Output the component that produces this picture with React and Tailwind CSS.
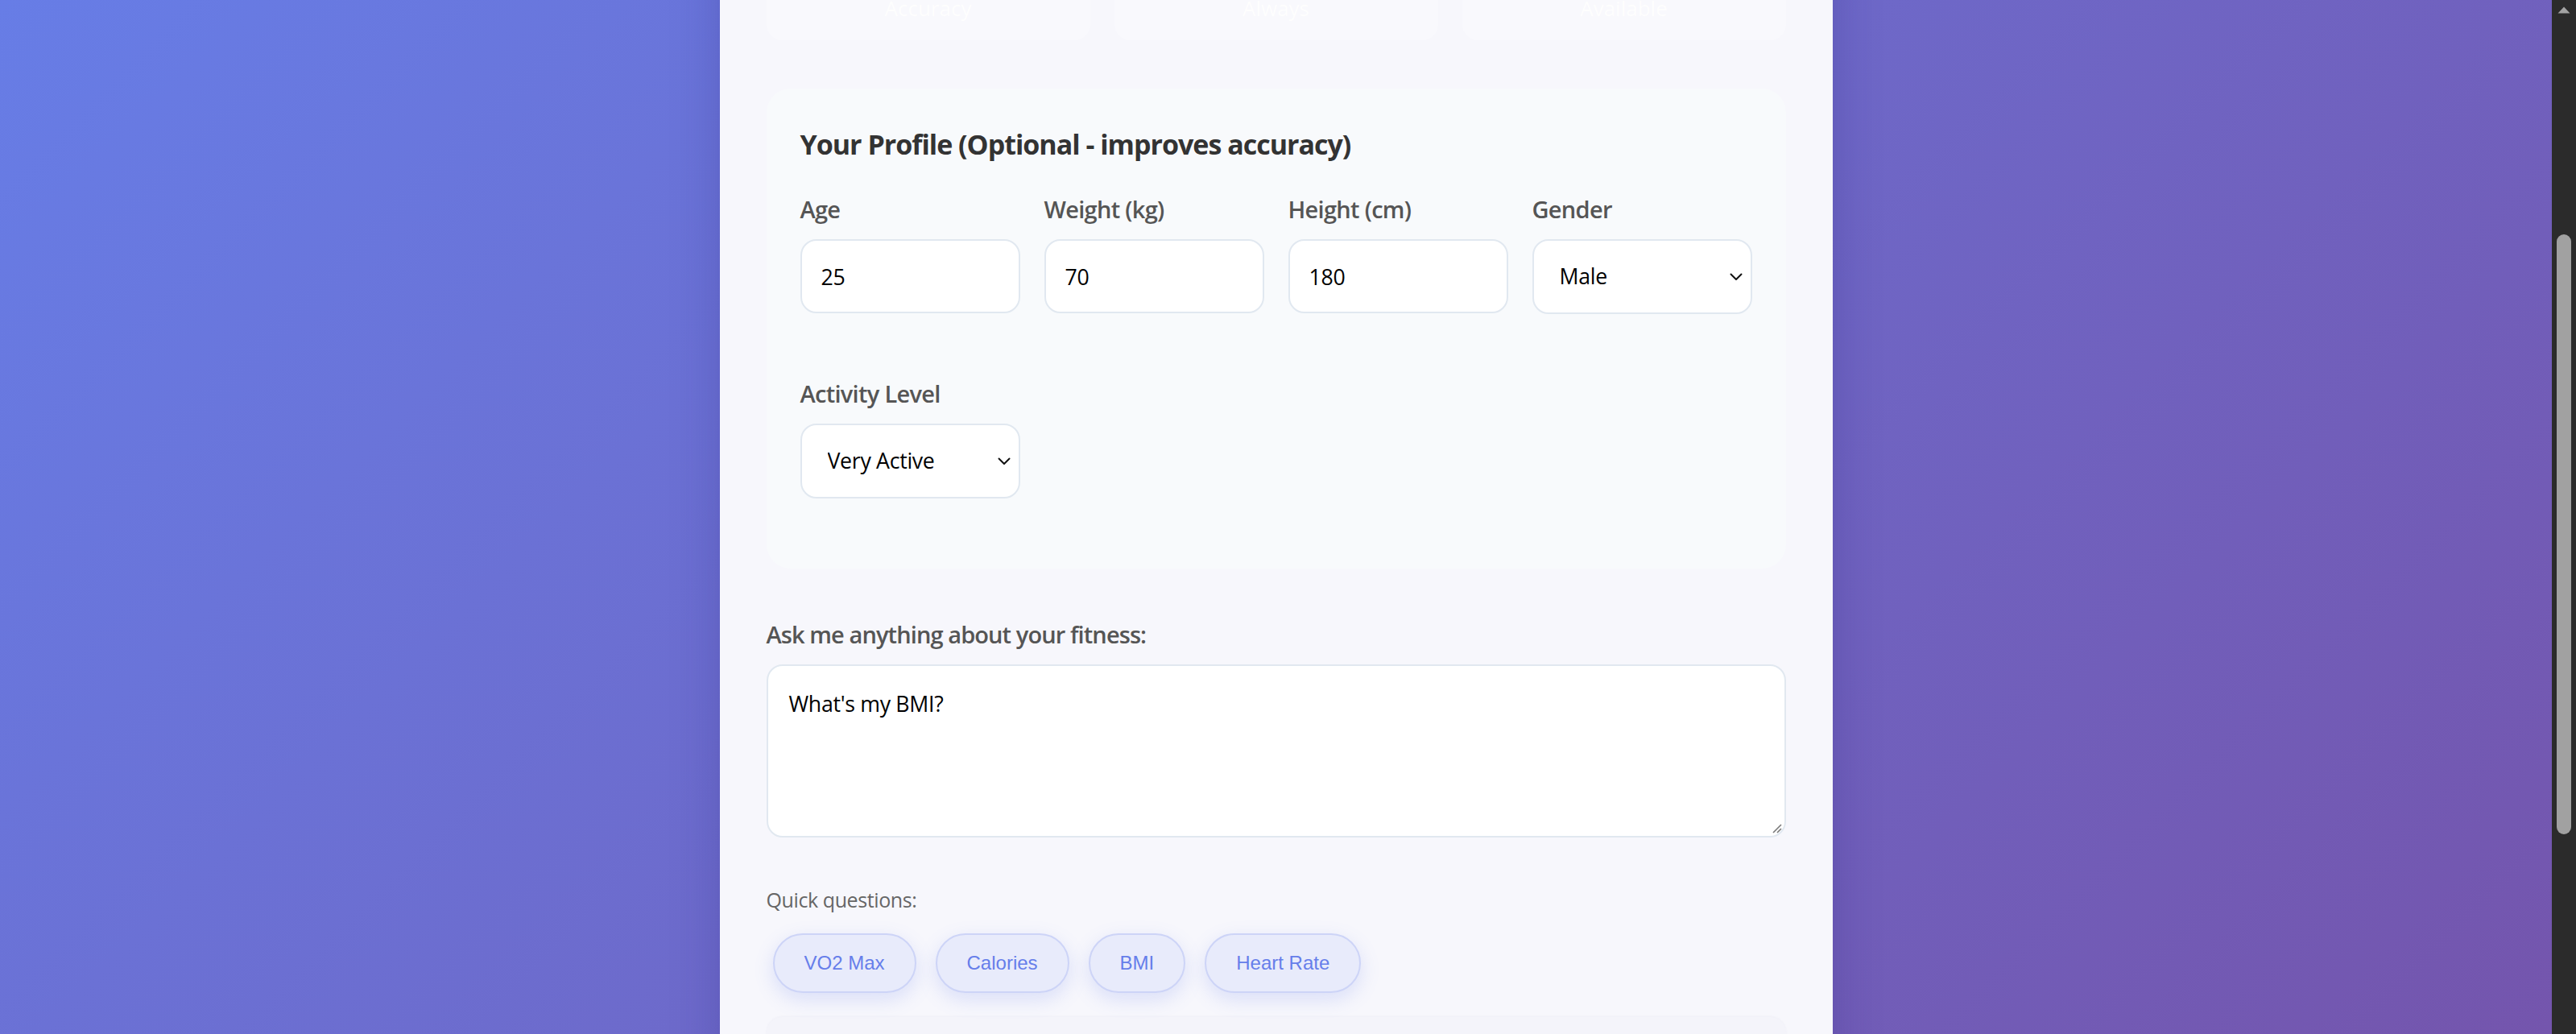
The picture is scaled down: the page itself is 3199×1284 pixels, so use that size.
import React from "react";

const stats = [
  { v: "95%", l: "Accuracy" },
  { v: "24/7", l: "Always" },
  { v: "Free", l: "Available" },
];

const quick = ["VO2 Max", "Calories", "BMI", "Heart Rate"];

function Chevron() {
  return (
    <svg
      className="pointer-events-none absolute right-[12px] top-1/2 -translate-y-1/2"
      width="16"
      height="10"
      viewBox="0 0 16 10"
      fill="none"
    >
      <path d="M1.5 1.5 L8 8 L14.5 1.5" stroke="#111" strokeWidth="2" strokeLinecap="round" strokeLinejoin="round" />
    </svg>
  );
}

function Field({ label, children }) {
  return (
    <div className="flex flex-col">
      <label className="mb-[18px] block text-[29px] font-semibold leading-[39px] tracking-[-0.7px] text-[#555]">
        {label}
      </label>
      {children}
    </div>
  );
}

const inputCls =
  "h-[92px] w-full rounded-[20px] border-2 border-[#e1e8f0] bg-white px-[24px] text-[26.7px] tracking-[-0.3px] text-black outline-none font-['Open_Sans',sans-serif]";

function TextInput({ value }) {
  return <input type="text" defaultValue={value} className={inputCls} />;
}

function Select({ value, options }) {
  return (
    <div className="relative">
      <select
        defaultValue={value}
        className="h-[93px] w-full appearance-none rounded-[20px] border-2 border-[#e1e8f0] bg-white pl-[32px] pr-[40px] text-[26.7px] tracking-[-0.3px] text-black outline-none font-['Open_Sans',sans-serif]"
      >
        {options.map((o) => (
          <option key={o}>{o}</option>
        ))}
      </select>
      <Chevron />
    </div>
  );
}

export default function App() {
  return (
    <div className="flex h-[1284px] w-full overflow-hidden font-['Open_Sans',sans-serif]">
      <main className="min-w-0 flex-1 overflow-hidden bg-[linear-gradient(135deg,#677de6_0%,#7455ad_100%)]">
        <div className="mx-auto -mt-[168px] w-[1382px] rounded-[40px] bg-[#f7f7fc] px-[58px] pt-[58px] pb-[80px] shadow-[0_0_60px_rgba(40,30,120,0.25)]">
          <div className="grid grid-cols-3 gap-[30px]">
            {stats.map((s) => (
              <div key={s.l} className="rounded-[20px] bg-[#f9f9fd] px-[30px] pt-[30px] pb-[22px] text-center text-white">
                <div className="text-[48px] font-bold leading-[73px]">{s.v}</div>
                <div className="text-[26px] leading-[35px] opacity-90">{s.l}</div>
              </div>
            ))}
          </div>

          <section className="mt-[60px] rounded-[30px] bg-[#f8fafc] px-[42px] pt-[45px] pb-[87px]">
            <h3 className="mb-[37px] text-[34px] font-bold leading-[48px] tracking-[-1px] text-[#333]">
              Your Profile (Optional - improves accuracy)
            </h3>
            <div className="grid grid-cols-4 gap-x-[30px] gap-y-[79px]">
              <Field label="Age">
                <TextInput value="25" />
              </Field>
              <Field label="Weight (kg)">
                <TextInput value="70" />
              </Field>
              <Field label="Height (cm)">
                <TextInput value="180" />
              </Field>
              <Field label="Gender">
                <Select value="Male" options={["Male", "Female"]} />
              </Field>
              <Field label="Activity Level">
                <Select
                  value="Very Active"
                  options={["Sedentary", "Lightly Active", "Moderately Active", "Very Active", "Extra Active"]}
                />
              </Field>
            </div>
          </section>

          <label className="mt-[62px] mb-[18px] block text-[29px] font-semibold leading-[39px] tracking-[-0.9px] text-[#555]">
            Ask me anything about your fitness:
          </label>
          <div className="relative">
            <textarea
              defaultValue="What's my BMI?"
              className="block h-[215px] w-full resize-none rounded-[20px] border-2 border-[#e1e8f0] bg-white px-[26px] pt-[27px] text-[26.7px] tracking-[-0.3px] text-black outline-none font-['Open_Sans',sans-serif]"
            />
            <svg className="pointer-events-none absolute bottom-[5px] right-[5px]" width="14" height="14" viewBox="0 0 14 14">
              <path d="M13 3 L3 13 M13 8 L8 13" stroke="#7a7a7a" strokeWidth="1.6" />
            </svg>
          </div>

          <div className="mt-[60px] text-[25px] leading-[34px] tracking-[-0.4px] text-[#666]">Quick questions:</div>
          <div className="mt-[25px] flex gap-[24px] pl-[8px]">
            {quick.map((q) => (
              <button
                key={q}
                className="h-[74px] rounded-full border-2 border-[#cdd4f7] bg-[#e8ebfb] px-[37px] font-['Liberation_Sans',Arial,sans-serif] text-[24px] text-[#667eea] shadow-[0_8px_24px_rgba(102,126,234,0.2)]"
              >
                {q}
              </button>
            ))}
          </div>

          <div className="mt-[30px] h-[120px] rounded-[20px] bg-[#f4f4fa] shadow-[0_-1px_3px_rgba(60,60,120,0.04)]" />
        </div>
      </main>

      <div className="flex w-[30px] shrink-0 flex-col items-center bg-[#2b2b2b]">
        <svg className="mt-[8px]" width="16" height="9" viewBox="0 0 16 9">
          <path d="M8 0.5 L15.5 8.5 L0.5 8.5 Z" fill="#a3a3a3" />
        </svg>
        <div className="mt-[274px] h-[745px] w-[18px] rounded-full bg-[#a1a1a1]" />
      </div>
    </div>
  );
}
